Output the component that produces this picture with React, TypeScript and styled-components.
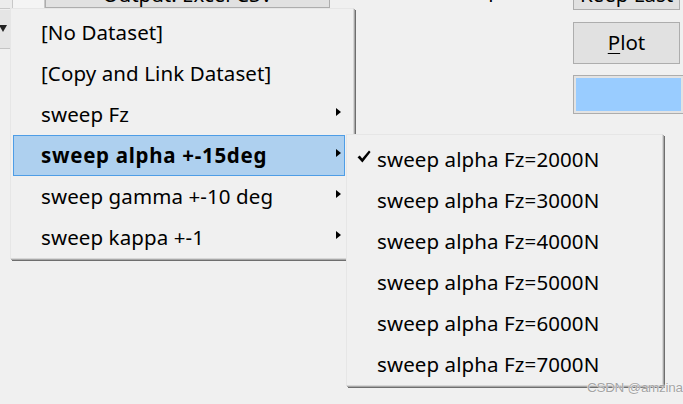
import React from "react";
import styled, { createGlobalStyle } from "styled-components";

const GlobalStyle = createGlobalStyle`
  html, body {
    margin: 0;
    padding: 0;
    background: #f0f0f0;
    overflow: hidden;
  }
  * {
    box-sizing: border-box;
  }
`;

const Form = styled.div`
  position: relative;
  width: 683px;
  height: 404px;
  overflow: hidden;
  background: #f0f0f0;
  display: flex;
  font-family: "Noto Sans", "Open Sans", sans-serif;
  font-size: 20.5px;
  color: #000;
`;

const LeftArea = styled.div`
  flex: 1;
  display: flex;
  flex-direction: column;
`;

const TopStrip = styled.div`
  display: flex;
  align-items: flex-end;
  height: 9px;
`;

const StubBox = styled.div<{ $w: number; $light?: boolean }>`
  width: ${(p) => p.$w}px;
  height: 30px;
  margin-top: -21px;
  background: ${(p) => (p.$light ? "#f4f4f4" : "#ececec")};
  border: 1px solid #c8c8c8;
  border-left: none;
`;

const WideButton = styled.div`
  width: 285px;
  height: 31px;
  margin-top: -23px;
  align-self: flex-start;
  display: flex;
  align-items: flex-end;
  justify-content: center;
  padding-bottom: 3px;
  background: #e1e1e1;
  border: 1px solid #adadad;
  line-height: 20px;
  overflow: hidden;
`;

const CutLabel = styled.div`
  margin-left: 128px;
  align-self: flex-start;
  margin-top: -21px;
  line-height: 20px;
`;

const ComboRow = styled.div`
  display: flex;
`;

const DropButton = styled.div`
  width: 10px;
  height: 39px;
  margin-top: 1px;
  background: #e5e5e5;
  border-bottom: 1px solid #c4c4c4;
  display: flex;
  align-items: center;
  justify-content: flex-start;
`;

const DownArrow = styled.span`
  width: 0;
  height: 0;
  margin-left: -1px;
  margin-bottom: 2px;
  border-top: 7px solid #222;
  border-left: 4.5px solid transparent;
  border-right: 4.5px solid transparent;
`;

const RightColumn = styled.div`
  width: 110px;
  display: flex;
  flex-direction: column;
`;

const Button = styled.div<{ $h: number; $mt: number; $cut?: boolean }>`
  height: ${(p) => p.$h}px;
  margin-top: ${(p) => p.$mt}px;
  width: 107px;
  background: #e1e1e1;
  border: 1px solid #adadad;
  display: flex;
  align-items: ${(p) => (p.$cut ? "flex-end" : "center")};
  justify-content: center;
  line-height: 20px;
  padding-bottom: ${(p) => (p.$cut ? "5px" : "2px")};
  overflow: hidden;
  white-space: nowrap;
`;

const Mnemonic = styled.span`
  text-decoration: underline;
  text-underline-offset: 3px;
  text-decoration-thickness: 1px;
`;

const ColorBox = styled.div`
  width: 110px;
  height: 39px;
  margin-top: 11px;
  background: #99ccff;
  border: 1px solid #adadad;
  border-right: none;
  box-shadow: inset 0 0 0 2px #e3e3e3;
`;

const Menu = styled.div<{ $left: number; $top: number; $width: number }>`
  position: absolute;
  left: ${(p) => p.$left}px;
  top: ${(p) => p.$top}px;
  width: ${(p) => p.$width}px;
  background: #f0f0f0;
  border: 1px solid #d6d6d6;
  border-top-color: #e6e6e6;
  border-left-color: #e6e6e6;
  box-shadow: 1px 1px 0 #a8a8a8, 2px 2px 0 #6e6e6e;
  display: flex;
  flex-direction: column;
`;

const MainMenu = styled(Menu)`
  padding: 3px 8px 0 2px;
`;

const SubMenu = styled(Menu)`
  padding: 4px 2px 0 2px;
`;

const Item = styled.div<{ $active?: boolean }>`
  height: 41px;
  display: flex;
  align-items: center;
  padding: 0 3px 0 0;
  border: 1px solid ${(p) => (p.$active ? "#4e9de6" : "transparent")};
  background: ${(p) => (p.$active ? "#aed0ef" : "transparent")};
  font-weight: ${(p) => (p.$active ? 700 : 400)};
  letter-spacing: ${(p) => (p.$active ? "0.7px" : "0.1px")};
  white-space: nowrap;
`;

const Gutter = styled.span`
  width: 27px;
  flex: none;
  display: flex;
  align-items: center;
  padding-left: 7px;
  margin-top: -6px;
`;

const Label = styled.span`
  flex: 1;
  margin-top: -2px;
`;

const SubArrow = styled.span`
  width: 0;
  height: 0;
  margin-bottom: 6px;
  border-left: 5px solid #000;
  border-top: 4.5px solid transparent;
  border-bottom: 4.5px solid transparent;
`;

const Watermark = styled.div`
  position: absolute;
  left: 587px;
  top: 380px;
  white-space: nowrap;
  font-family: "Liberation Sans", Arial, sans-serif;
  font-size: 13.5px;
  color: #a4a4a4;
  text-shadow: 0 0 1px #fff, 0 0 1px #fff;
  letter-spacing: -0.3px;
`;

const Check = () => (
  <svg width="14" height="14" viewBox="0 0 14 14">
    <path d="M0.5 7.2 L2.8 5.4 L5.2 8.6 L12 0.6 L13.6 2 L5.4 12.6 Z" fill="#000" />
  </svg>
);

const mainItems = [
  { label: "[No Dataset]" },
  { label: "[Copy and Link Dataset]" },
  { label: "sweep Fz", sub: true },
  { label: "sweep alpha +-15deg", sub: true, active: true },
  { label: "sweep gamma +-10 deg", sub: true },
  { label: "sweep kappa +-1", sub: true },
];

const subItems = [2000, 3000, 4000, 5000, 6000, 7000];

export default function App() {
  return (
    <>
      <GlobalStyle />
      <Form>
        <LeftArea>
          <TopStrip>
            <StubBox $w={13} />
            <StubBox $w={32} $light />
            <WideButton>Output: Excel CSV</WideButton>
            <CutLabel>Step</CutLabel>
          </TopStrip>
          <ComboRow>
            <DropButton>
              <DownArrow />
            </DropButton>
          </ComboRow>
        </LeftArea>
        <RightColumn>
          <Button $h={31} $mt={-21} $cut>
            Keep Last
          </Button>
          <Button $h={42} $mt={12}>
            <Mnemonic>P</Mnemonic>lot
          </Button>
          <ColorBox />
        </RightColumn>

        <MainMenu $left={10} $top={8} $width={344}>
          {mainItems.map((it) => (
            <Item key={it.label} $active={it.active}>
              <Gutter />
              <Label>{it.label}</Label>
              {it.sub && <SubArrow />}
            </Item>
          ))}
        </MainMenu>

        <SubMenu $left={346} $top={134} $width={317}>
          {subItems.map((fz, i) => (
            <Item key={fz}>
              <Gutter>{i === 0 && <Check />}</Gutter>
              <Label>sweep alpha Fz={fz}N</Label>
            </Item>
          ))}
        </SubMenu>

        <Watermark>CSDN @amzina</Watermark>
      </Form>
    </>
  );
}
